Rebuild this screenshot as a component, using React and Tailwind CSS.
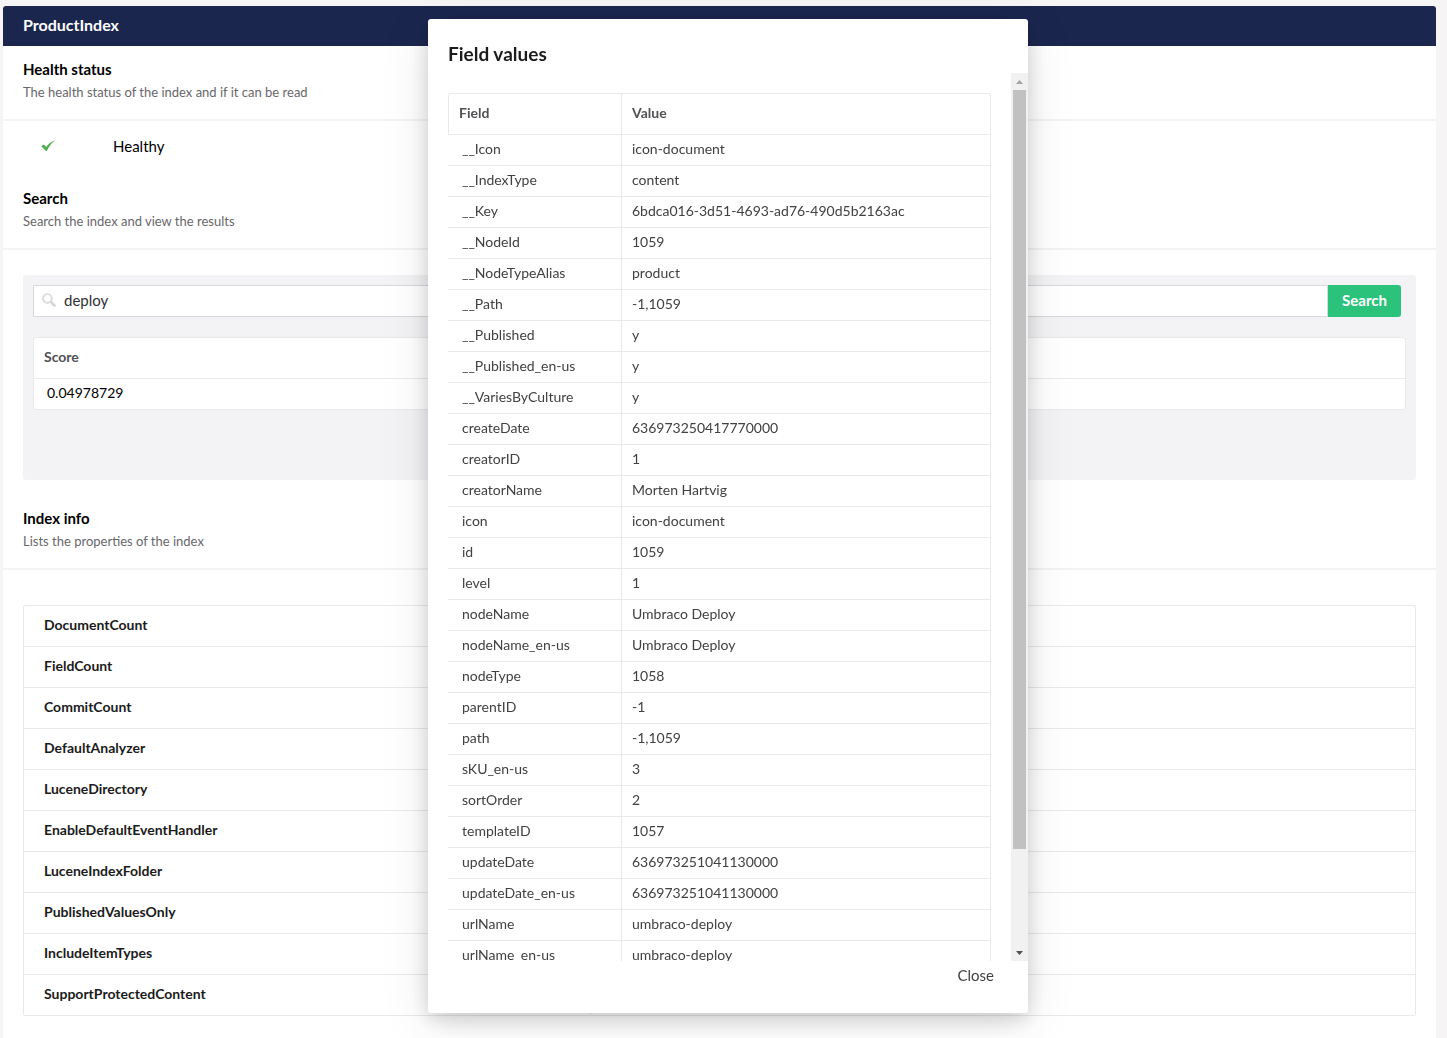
const indexInfo = [
  'DocumentCount',
  'FieldCount',
  'CommitCount',
  'DefaultAnalyzer',
  'LuceneDirectory',
  'EnableDefaultEventHandler',
  'LuceneIndexFolder',
  'PublishedValuesOnly',
  'IncludeItemTypes',
  'SupportProtectedContent',
]

const fieldValues = [
  ['__Icon', 'icon-document'],
  ['__IndexType', 'content'],
  ['__Key', '6bdca016-3d51-4693-ad76-490d5b2163ac'],
  ['__NodeId', '1059'],
  ['__NodeTypeAlias', 'product'],
  ['__Path', '-1,1059'],
  ['__Published', 'y'],
  ['__Published_en-us', 'y'],
  ['__VariesByCulture', 'y'],
  ['createDate', '636973250417770000'],
  ['creatorID', '1'],
  ['creatorName', 'Morten Hartvig'],
  ['icon', 'icon-document'],
  ['id', '1059'],
  ['level', '1'],
  ['nodeName', 'Umbraco Deploy'],
  ['nodeName_en-us', 'Umbraco Deploy'],
  ['nodeType', '1058'],
  ['parentID', '-1'],
  ['path', '-1,1059'],
  ['sKU_en-us', '3'],
  ['sortOrder', '2'],
  ['templateID', '1057'],
  ['updateDate', '636973251041130000'],
  ['updateDate_en-us', '636973251041130000'],
  ['urlName', 'umbraco-deploy'],
  ['urlName_en-us', 'umbraco-deploy'],
]

function SectionHeader({ title, description }) {
  return (
    <div className="border-b-2 border-[#f3f3f5] px-5 pt-[13px] pb-[17px]">
      <h2 className="text-[15px] leading-5 font-bold text-black">{title}</h2>
      <p className="mt-[3px] text-[13px] leading-5 text-[#68676b]">{description}</p>
    </div>
  )
}

function CheckIcon() {
  return (
    <svg className="h-3 w-[14px]" viewBox="0 0 14 12" aria-hidden="true">
      <path d="M0.3 6.2 L2.9 4.4 L5.2 7 C7.3 4.2 9.8 2 13.4 0.4 L13.6 0.8 C10.3 3.4 7.8 6.8 5.8 11 L5 11 Z" fill="#4cae4c" />
    </svg>
  )
}

function SearchIcon() {
  return (
    <svg className="size-3.5 shrink-0" viewBox="0 0 14 14" fill="none" stroke="#d8d7d9" aria-hidden="true">
      <circle cx="5.4" cy="5.4" r="4.4" strokeWidth="1.7" />
      <path d="M8.8 8.8 L12.4 12.4" strokeWidth="2.8" strokeLinecap="round" />
    </svg>
  )
}

function ScrollBar() {
  return (
    <div className="flex w-[17px] shrink-0 flex-col bg-[#f1f1f1]" aria-hidden="true">
      <div className="flex h-[17px] items-center justify-center">
        <svg className="h-1 w-[7px]" viewBox="0 0 7 4"><path d="M0 4 L3.5 0 L7 4 Z" fill="#a3a3a3" /></svg>
      </div>
      <div className="flex-1 px-0.5">
        <div className="h-8/9 bg-[#c1c1c1]" />
      </div>
      <div className="flex h-[17px] items-center justify-center">
        <svg className="h-1 w-[7px]" viewBox="0 0 7 4"><path d="M0 0 L3.5 4 L7 0 Z" fill="#505050" /></svg>
      </div>
    </div>
  )
}

function FieldValuesDialog() {
  return (
    <div className="fixed inset-0 flex justify-center pt-[19px] pb-[25px] pl-[9px]">
      <div
        role="dialog"
        aria-labelledby="dialog-title"
        className="flex w-[600px] flex-col rounded-[3px] bg-white text-[#414042] shadow-[0_10px_50px_rgba(0,0,0,0.1),0_6px_20px_rgba(0,0,0,0.16)]"
      >
        <h2 id="dialog-title" className="px-5 pt-[23px] pb-[7px] text-[19px] leading-6 font-bold text-[#1b1b1b]">
          Field values
        </h2>
        <div className="flex min-h-0 flex-1">
          <div className="min-w-0 flex-1 overflow-hidden p-5">
            <div className="rounded-[3px] border-t border-r border-[#e9e9eb]">
              <table className="w-full table-fixed border-separate border-spacing-0 text-left text-sm">
                <thead>
                  <tr className="h-[41px] text-[#515054]">
                    <th className="w-[174px] rounded-tl-[3px] border-r border-b border-l border-[#e9e9eb] px-2.5 pb-0.5 font-bold">Field</th>
                    <th className="border-b border-[#e9e9eb] px-2.5 pb-0.5 font-bold">Value</th>
                  </tr>
                </thead>
                <tbody>
                  {fieldValues.map(([field, value]) => (
                    <tr key={field} className="h-[31px]">
                      <td className="border-r border-b border-[#e9e9eb] pr-2.5 pb-0.5 pl-3.5">{field}</td>
                      <td className="border-b border-[#e9e9eb] px-2.5 pb-0.5">{value}</td>
                    </tr>
                  ))}
                </tbody>
              </table>
            </div>
          </div>
          <ScrollBar />
        </div>
        <div className="flex h-[52px] items-start justify-end px-[34px] pt-1">
          <button type="button" className="text-[15px] leading-5">Close</button>
        </div>
      </div>
    </div>
  )
}

export default function App() {
  return (
    <div className="flex min-h-screen flex-col bg-[#f6f4f5] pt-1.5 pr-[11px] pl-[3px] font-['Lato',sans-serif]">
      <main className="flex-1 rounded-t-[3px] bg-white pb-5">
        <h1 className="flex h-10 items-center rounded-t-[3px] bg-[#1b264f] px-5 pb-0.5 text-base font-bold text-white">ProductIndex</h1>

        <section>
          <SectionHeader title="Health status" description="The health status of the index and if it can be read" />
          <div className="flex h-[54px] items-center pb-1 pl-[38px] text-[15px] text-black">
            <CheckIcon />
            <span className="pl-[58px]">Healthy</span>
          </div>
        </section>

        <section>
          <SectionHeader title="Search" description="Search the index and view the results" />
          <div className="mx-5 mt-[25px] mb-[15px] min-h-[205px] rounded-[3px] bg-[#f3f3f5] p-2.5">
            <form className="flex h-8 pr-[5px]" onSubmit={(e) => e.preventDefault()}>
              <label className="flex flex-1 items-center gap-2 border border-[#d8d7d9] bg-white px-2 pb-0.5">
                <SearchIcon />
                <input
                  type="text"
                  aria-label="Search the index"
                  defaultValue="deploy"
                  className="min-w-0 flex-1 bg-transparent text-[15px] text-[#303033] outline-none"
                />
              </label>
              <button type="submit" className="rounded-r-[3px] bg-[#2bc37c] px-3.5 pb-0.5 text-[15px] font-bold text-white">Search</button>
            </form>
            <table className="mt-5 w-full border-separate border-spacing-0 rounded-[3px] border border-[#e9e9eb] bg-white text-left text-sm">
              <thead>
                <tr className="h-[41px]">
                  <th className="border-b border-[#e9e9eb] px-2.5 pb-0.5 font-bold text-[#515054]">Score</th>
                </tr>
              </thead>
              <tbody>
                <tr className="h-[30px]">
                  <td className="px-[13px] pb-0.5 text-black">0.04978729</td>
                </tr>
              </tbody>
            </table>
          </div>
        </section>

        <section>
          <SectionHeader title="Index info" description="Lists the properties of the index" />
          <div className="mx-5 mt-[35px] rounded-[3px] border border-b-0 border-[#e9e9eb]">
            <table className="w-full border-separate border-spacing-0 text-left text-sm">
              <tbody>
                {indexInfo.map((name) => (
                  <tr key={name} className="h-[41px]">
                    <th scope="row" className="w-[567px] border-r border-b border-[#e9e9eb] px-5 pb-0.5 font-bold text-[#1b1b1b]">{name}</th>
                    <td className="border-b border-[#e9e9eb]" />
                  </tr>
                ))}
              </tbody>
            </table>
          </div>
        </section>
      </main>

      <FieldValuesDialog />
    </div>
  )
}
